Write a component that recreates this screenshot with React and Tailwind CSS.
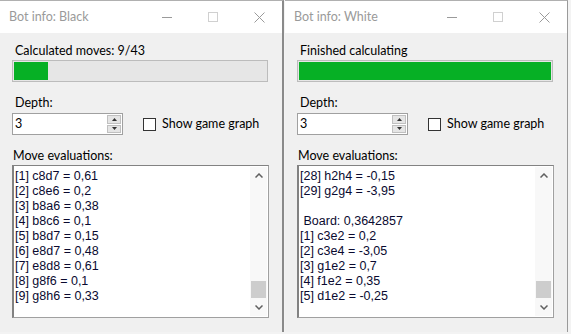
import React from "react";

const ui = { fontFamily: 'Lato, "Noto Sans", sans-serif' };
const mono = { fontFamily: '"Liberation Sans", Arial, sans-serif' };

function TitleBar({ title }) {
  return (
    <div className="h-[32px] bg-white flex items-center justify-between pl-[9px] text-[#9a9a9a]">
      <span className="text-[12.5px]" style={ui}>{title}</span>
      <div className="flex items-center h-full">
        <div className="w-[46px] h-full flex items-center justify-center">
          <div className="w-[10px] h-px bg-[#9a9a9a]" />
        </div>
        <div className="w-[46px] h-full flex items-center justify-center">
          <div className="w-[10px] h-[10px] border border-[#d0d0d0]" />
        </div>
        <div className="w-[46px] h-full flex items-center justify-center">
          <svg width="11" height="11" viewBox="0 0 11 11">
            <path d="M0.5 0.5 L10.5 10.5 M10.5 0.5 L0.5 10.5" stroke="#9a9a9a" strokeWidth="1" />
          </svg>
        </div>
      </div>
    </div>
  );
}

function Spinner() {
  return (
    <div className="w-[111px] h-[22px] bg-white border border-[#a0a0a0] flex items-center">
      <span className="flex-1 pl-[2px] text-[12.5px] text-black" style={ui}>3</span>
      <div className="w-[14px] h-full flex flex-col gap-px py-px mr-px">
        <div className="flex-1 bg-[#e5e5e5] border border-[#c0c0c0] flex items-center justify-center">
          <svg width="5" height="3" viewBox="0 0 5 3"><path d="M2.5 0 L5 3 L0 3 Z" fill="#333" /></svg>
        </div>
        <div className="flex-1 bg-[#e5e5e5] border border-[#c0c0c0] flex items-center justify-center">
          <svg width="5" height="3" viewBox="0 0 5 3"><path d="M0 0 L5 0 L2.5 3 Z" fill="#333" /></svg>
        </div>
      </div>
    </div>
  );
}

function ListBox({ lines }) {
  return (
    <div className="w-[257px] h-[153px] bg-white border border-[#a0a0a0] border-t-[#828282] border-l-[#828282] border-l-2 flex">
      <div className="flex-1 pt-[3px] pl-[1px] text-[12.5px] leading-[15px] text-[#0a0a30]" style={mono}>
        {lines.map((l, i) => (
          <div key={i} className="h-[15px] whitespace-pre">{l}</div>
        ))}
      </div>
      <div className="w-[17px] my-px mr-px flex flex-col items-center bg-[#f8f8f8]">
        <div className="h-[17px] flex items-center justify-center">
          <svg width="8" height="5" viewBox="0 0 8 5"><path d="M0.5 4.5 L4 1 L7.5 4.5" stroke="#606060" strokeWidth="1.5" fill="none" /></svg>
        </div>
        <div className="flex-1 w-full flex flex-col justify-end pb-[1px]">
          <div className="h-[17px] w-[15px] mx-auto bg-[#cdcdcd]" />
        </div>
        <div className="h-[17px] flex items-center justify-center">
          <svg width="8" height="5" viewBox="0 0 8 5"><path d="M0.5 0.5 L4 4 L7.5 0.5" stroke="#606060" strokeWidth="1.5" fill="none" /></svg>
        </div>
      </div>
    </div>
  );
}

function BotWindow({ title, status, progress, lines, className }) {
  return (
    <div className={"h-[332px] bg-[#f0f0f0] border-t border-[#b0b0b0] flex flex-col " + className}>
      <TitleBar title={title} />
      <div className="pl-[12px] flex flex-col text-[12.5px] text-black" style={ui}>
        <div className="mt-[10px] h-[16px] leading-[16px] pl-[3px]">{status}</div>
        <div className="mt-[1px] w-[256px] h-[22px] border border-[#bcbcbc] bg-[#e6e6e6] p-px">
          <div className="h-full bg-[#06b025]" style={{ width: progress }} />
        </div>
        <div className="mt-[13px] h-[16px] leading-[16px] pl-[3px]">Depth:</div>
        <div className="mt-[2px] flex items-center">
          <Spinner />
          <div className="ml-[20px] w-[13px] h-[13px] bg-white border border-[#333]" />
          <span className="ml-[6px]">Show game graph</span>
        </div>
        <div className="mt-[13px] h-[16px] leading-[16px] pl-[1px]">Move evaluations:</div>
        <div className="mt-[1px]">
          <ListBox lines={lines} />
        </div>
      </div>
    </div>
  );
}

export default function App() {
  const black = [
    "[1] c8d7 = 0,61",
    "[2] c8e6 = 0,2",
    "[3] b8a6 = 0,38",
    "[4] b8c6 = 0,1",
    "[5] b8d7 = 0,15",
    "[6] e8d7 = 0,48",
    "[7] e8d8 = 0,61",
    "[8] g8f6 = 0,1",
    "[9] g8h6 = 0,33",
  ];
  const white = [
    "[28] h2h4 = -0,15",
    "[29] g2g4 = -3,95",
    "",
    " Board: 0,3642857",
    "[1] c3e2 = 0,2",
    "[2] c3e4 = -3,05",
    "[3] g1e2 = 0,7",
    "[4] f1e2 = 0,35",
    "[5] d1e2 = -0,25",
  ];
  return (
    <div className="w-[571px] h-[334px] bg-[#f3f3f3] flex overflow-hidden">
      <BotWindow
        title="Bot info: Black"
        status="Calculated moves: 9/43"
        progress="34px"
        lines={black}
        className="w-[284px] border-r-2 border-r-[#8a8a8a]"
      />
      <BotWindow
        title="Bot info: White"
        status="Finished calculating"
        progress="100%"
        lines={white}
        className="w-[283px] border-r border-r-[#9a9a9a] ml-px"
      />
    </div>
  );
}
